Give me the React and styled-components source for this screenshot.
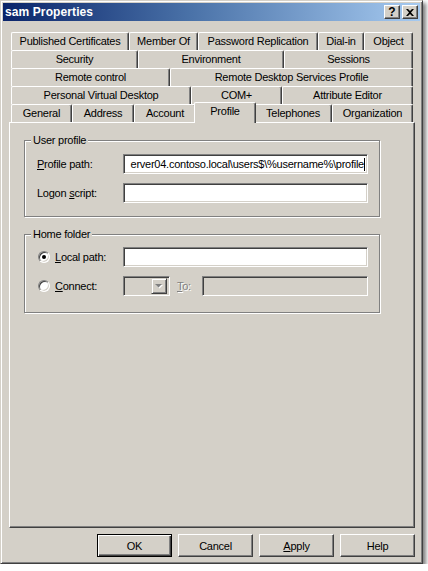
import React from 'react';
import styled, { createGlobalStyle } from 'styled-components';

const Global = createGlobalStyle`
  html, body { margin: 0; padding: 0; background: #ffffff; }
  body {
    font-family: "Liberation Sans", Arial, sans-serif;
    font-size: 11px;
    letter-spacing: -0.25px;
    color: #000;
  }
  * { box-sizing: border-box; }
`;

const Window = styled.div`
  width: 423px;
  height: 564px;
  background: #d4d0c8;
  border: 1px solid;
  border-color: #d4d0c8 #404040 #404040 #d4d0c8;
  box-shadow: inset 1px 1px #ffffff, inset -1px -1px #808080,
    3px 3px 4px rgba(0, 0, 0, 0.5);
  padding: 2px;
  display: flex;
  flex-direction: column;
`;

const TitleBar = styled.div`
  height: 18px;
  flex: none;
  display: flex;
  align-items: center;
  justify-content: space-between;
  padding: 0 2px 0 2px;
  background: linear-gradient(to right, #0a246a 0%, #4a72a8 45%, #a6caf0 100%);
`;

const TitleText = styled.span`
  color: #fff;
  font-weight: bold;
  font-size: 12px;
  letter-spacing: 0.1px;
`;

const TitleButtons = styled.div`
  display: flex;
  gap: 2px;
`;

const CaptionButton = styled.div`
  width: 16px;
  height: 14px;
  background: #d4d0c8;
  border: 1px solid;
  border-color: #ffffff #404040 #404040 #ffffff;
  box-shadow: inset -1px -1px #808080;
  display: flex;
  align-items: center;
  justify-content: center;
  font-weight: bold;
  font-size: 12px;
  line-height: 12px;
  letter-spacing: 0;
`;

const Body = styled.div`
  flex: 1;
  display: flex;
  flex-direction: column;
  padding: 11px 5px 4px 6px;
`;

const Tabs = styled.div`
  display: flex;
  flex-direction: column;
  padding-left: 2px;
`;

const TabRow = styled.div`
  display: flex;
  height: 18px;
`;

const Tab = styled.div`
  position: relative;
  flex: none;
  width: ${(p) => (p.$active ? p.$w + 4 : p.$w)}px;
  height: ${(p) => (p.$active ? 21 : 18)}px;
  margin: ${(p) => (p.$active ? '-2px -2px 0 -2px' : '0')};
  z-index: ${(p) => (p.$active ? 2 : 0)};
  background: #d4d0c8;
  border-top: 1px solid #ffffff;
  border-left: 1px solid #ffffff;
  border-right: 1px solid #404040;
  border-radius: 2px 2px 0 0;
  box-shadow: inset -1px 0 #808080;
  display: flex;
  justify-content: center;
  align-items: flex-start;
  padding-top: 2px;
  white-space: nowrap;
  line-height: 13px;
`;

const Panel = styled.div`
  height: 406px;
  flex: none;
  background: #d4d0c8;
  border: 1px solid;
  border-color: #ffffff #404040 #404040 #ffffff;
  box-shadow: inset -1px -1px #808080;
  padding: 17px 0 0 14px;
  display: flex;
  flex-direction: column;
  gap: 17px;
`;

const Group = styled.div`
  position: relative;
  width: 356px;
  border: 1px solid #808080;
  box-shadow: inset 1px 1px #ffffff, 1px 1px #ffffff;
  padding: ${(p) => p.$pad};
  display: flex;
  flex-direction: column;
  gap: 9px;
`;

const GroupTitle = styled.span`
  position: absolute;
  top: -7px;
  left: 6px;
  padding: 0 2px;
  background: #d4d0c8;
  line-height: 13px;
`;

const Row = styled.div`
  display: flex;
  align-items: center;
  height: 20px;
`;

const LabelCell = styled.div`
  width: 86px;
  flex: none;
  display: flex;
  align-items: center;
  gap: 5px;
`;

const FieldLabel = styled.span`
  white-space: nowrap;
  flex: none;
  width: ${(p) => (p.$w ? `${p.$w}px` : 'auto')};
  color: ${(p) => (p.$disabled ? '#808080' : '#000')};
  text-shadow: ${(p) => (p.$disabled ? '1px 1px #ffffff' : 'none')};
`;

const TextBox = styled.div`
  width: ${(p) => (p.$w ? `${p.$w}px` : 'auto')};
  flex: ${(p) => (p.$w ? 'none' : '1')};
  height: 20px;
  background: ${(p) => (p.$disabled ? '#d4d0c8' : '#ffffff')};
  border: 1px solid;
  border-color: #808080 #ffffff #ffffff #808080;
  box-shadow: inset 1px 1px #404040, inset -1px -1px #d4d0c8;
  display: flex;
  align-items: center;
  justify-content: ${(p) => (p.$end ? 'flex-end' : 'flex-start')};
  overflow: hidden;
  white-space: nowrap;
  padding: ${(p) => (p.$combo ? '2px' : '0 2px 0 2px')};
`;

const Caret = styled.span`
  display: inline-block;
  width: 1px;
  height: 13px;
  background: #000;
  flex: none;
`;

const ComboButton = styled.div`
  width: 16px;
  height: 16px;
  background: #d4d0c8;
  border: 1px solid;
  border-color: #d4d0c8 #404040 #404040 #d4d0c8;
  box-shadow: inset 1px 1px #ffffff, inset -1px -1px #808080;
  display: flex;
  align-items: center;
  justify-content: center;
`;

const Radio = styled.span`
  position: relative;
  width: 12px;
  height: 12px;
  margin-left: 1px;
  flex: none;
  border-radius: 50%;
  background: #ffffff;
  border: 1px solid;
  border-color: #808080 #ffffff #ffffff #808080;
  box-shadow: inset 1px 1px #404040, inset -1px -1px #d4d0c8;
  &::after {
    content: '';
    display: ${(p) => (p.$checked ? 'block' : 'none')};
    position: absolute;
    left: 3px;
    top: 3px;
    width: 4px;
    height: 4px;
    border-radius: 50%;
    background: #000;
  }
`;

const Gap = styled.div`
  width: ${(p) => p.$w}px;
  flex: none;
`;

const ButtonBar = styled.div`
  margin-top: 6px;
  display: flex;
  justify-content: flex-end;
  gap: 6px;
`;

const Button = styled.div`
  width: 75px;
  height: 23px;
  background: #d4d0c8;
  border: 1px solid;
  border-color: ${(p) =>
    p.$default ? '#000000' : '#ffffff #404040 #404040 #ffffff'};
  box-shadow: ${(p) =>
    p.$default
      ? 'inset 1px 1px #ffffff, inset -1px -1px #404040, inset -2px -2px #808080'
      : 'inset -1px -1px #808080'};
  display: flex;
  align-items: center;
  justify-content: center;
  padding-top: 1px;
`;

const tabRows = [
  [
    ['Published Certificates', 118],
    ['Member Of', 69],
    ['Password Replication', 120],
    ['Dial-in', 46],
    ['Object', 49],
  ],
  [
    ['Security', 127],
    ['Environment', 146],
    ['Sessions', 129],
  ],
  [
    ['Remote control', 159],
    ['Remote Desktop Services Profile', 243],
  ],
  [
    ['Personal Virtual Desktop', 180],
    ['COM+', 91],
    ['Attribute Editor', 131],
  ],
  [
    ['General', 61],
    ['Address', 62],
    ['Account', 62],
    ['Profile', 58],
    ['Telephones', 78],
    ['Organization', 81],
  ],
];

export default function App() {
  return (
    <>
      <Global />
      <Window>
        <TitleBar>
          <TitleText>sam Properties</TitleText>
          <TitleButtons>
            <CaptionButton>?</CaptionButton>
            <CaptionButton>
              <svg width="8" height="7" viewBox="0 0 8 7">
                <path d="M0 0h2l2 2 2-2h2L5 3.5 8 7H6L4 5 2 7H0l3-3.5z" fill="#000" />
              </svg>
            </CaptionButton>
          </TitleButtons>
        </TitleBar>
        <Body>
          <Tabs>
            {tabRows.map((row, i) => (
              <TabRow key={i}>
                {row.map(([label, w]) => (
                  <Tab key={label} $w={w} $active={label === 'Profile'}>
                    {label}
                  </Tab>
                ))}
              </TabRow>
            ))}
          </Tabs>
          <Panel>
            <Group $pad="13px 11px 13px 12px">
              <GroupTitle>User profile</GroupTitle>
              <Row>
                <LabelCell>
                  <FieldLabel>
                    <u>P</u>rofile path:
                  </FieldLabel>
                </LabelCell>
                <TextBox $w={245} $end>
                  erver04.contoso.local\users$\%username%\profile
                  <Caret />
                </TextBox>
              </Row>
              <Row>
                <LabelCell>
                  <FieldLabel>
                    Logon <u>s</u>cript:
                  </FieldLabel>
                </LabelCell>
                <TextBox $w={245} />
              </Row>
            </Group>
            <Group $pad="12px 11px 16px 12px">
              <GroupTitle>Home folder</GroupTitle>
              <Row>
                <LabelCell>
                  <Radio $checked />
                  <FieldLabel>
                    <u>L</u>ocal path:
                  </FieldLabel>
                </LabelCell>
                <TextBox $w={245} />
              </Row>
              <Row>
                <LabelCell>
                  <Radio />
                  <FieldLabel>
                    <u>C</u>onnect:
                  </FieldLabel>
                </LabelCell>
                <TextBox $w={47} $disabled $combo $end>
                  <ComboButton>
                    <svg width="8" height="5" viewBox="0 0 8 5">
                      <path d="M1 1h7L4.5 4.5z" fill="#ffffff" />
                      <path d="M0 0h7L3.5 3.5z" fill="#808080" />
                    </svg>
                  </ComboButton>
                </TextBox>
                <Gap $w={7} />
                <FieldLabel $disabled $w={18}>
                  <u>T</u>o:
                </FieldLabel>
                <Gap $w={7} />
                <TextBox $disabled />
              </Row>
            </Group>
          </Panel>
          <ButtonBar>
            <Button $default>OK</Button>
            <Button>Cancel</Button>
            <Button>
              <span>
                <u>A</u>pply
              </span>
            </Button>
            <Button>Help</Button>
          </ButtonBar>
        </Body>
      </Window>
    </>
  );
}
